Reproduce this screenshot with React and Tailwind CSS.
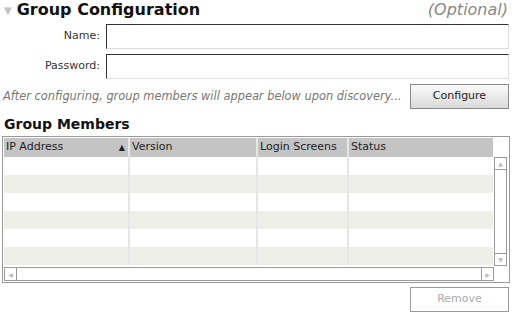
const font = { fontFamily: '"DejaVu Sans", Verdana, sans-serif' }

const columns = [
  { label: 'IP Address', width: 'w-[126px]', sorted: true },
  { label: 'Version', width: 'w-[128px]' },
  { label: 'Login Screens', width: 'w-[91px]' },
  { label: 'Status', width: 'flex-1' },
]

function Field({ label }) {
  return (
    <div className="flex items-center h-[25px]">
      <label className="w-[100px] text-right pr-[6px] text-[11px] text-[#333]">{label}</label>
      <input
        type="text"
        className="h-[25px] w-[403px] border border-t-[#333] border-l-[#333] border-r-[#ddd] border-b-[#ddd] bg-white outline-none"
      />
    </div>
  )
}

function Button({ children, disabled }) {
  return (
    <button
      className={
        'h-[25px] w-[99px] border text-[11px] ' +
        (disabled
          ? 'border-[#999] bg-white text-[#aaa]'
          : 'border-[#888] bg-gradient-to-b from-[#fbfbfb] to-[#d9d9d9] text-[#222]')
      }
    >
      {children}
    </button>
  )
}

export default function App() {
  return (
    <div className="w-[518px] h-[315px] bg-white overflow-hidden text-[#222]" style={font}>
      {/* Title */}
      <div className="flex items-center justify-between h-[20px] pl-[4px] pr-[10px]">
        <div className="flex items-center gap-[5px]">
          <span className="text-[#c4c4c4] text-[10px] leading-none mt-[2px]">▼</span>
          <span className="text-[16px] font-bold leading-none text-[#111]">Group Configuration</span>
        </div>
        <span className="text-[16px] italic text-[#888] leading-none">(Optional)</span>
      </div>

      {/* Fields */}
      <div className="flex flex-col gap-[5px] mt-[4px] pl-[6px]">
        <Field label="Name:" />
        <Field label="Password:" />
      </div>

      {/* Helper + configure */}
      <div className="flex items-center justify-between mt-[5px] pl-[3px] pr-[9px]">
        <span className="text-[11.4px] italic text-[#777]">
          After configuring, group members will appear below upon discovery...
        </span>
        <Button>Configure</Button>
      </div>

      {/* Group members */}
      <div className="mt-[8px] pl-[4px] text-[14px] font-bold leading-none text-[#111]">Group Members</div>

      <div className="mt-[5px] ml-[2px] w-[508px] h-[147px] border border-[#999] p-[1px] flex flex-col">
        <div className="flex flex-1 min-h-0">
          <div className="flex flex-col w-[489px]">
            <div className="flex h-[19px] bg-[#c4c4c4] text-[11px]">
              {columns.map((c) => (
                <div
                  key={c.label}
                  className={`${c.width} flex items-center justify-between px-[2px] border-r-2 border-[#e6e6e6] last:border-r-0`}
                >
                  <span>{c.label}</span>
                  {c.sorted && <span className="text-[8px] mr-[1px]">▲</span>}
                </div>
              ))}
            </div>
            {[0, 1, 2, 3, 4, 5].map((r) => (
              <div key={r} className={`flex h-[18px] ${r % 2 ? 'bg-[#efefe9]' : 'bg-white'}`}>
                {columns.map((c) => (
                  <div key={c.label} className={`${c.width} border-r-2 border-[#e6e6e6] last:border-r-0`} />
                ))}
              </div>
            ))}
          </div>
          <div className="flex-1 flex flex-col items-center pt-[19px]">
            <div className="w-[13px] flex-1 border border-[#999] flex flex-col justify-between">
              <div className="h-[12px] border-b border-[#999] flex items-center justify-center text-[6px] text-[#bbb]">▲</div>
              <div className="h-[12px] border-t border-[#999] flex items-center justify-center text-[6px] text-[#bbb]">▼</div>
            </div>
          </div>
        </div>
        <div className="h-[14px] mt-[1px] w-[490px] border border-[#999] flex justify-between">
          <div className="w-[12px] border-r border-[#999] flex items-center justify-center text-[6px] text-[#bbb]">◀</div>
          <div className="w-[12px] border-l border-[#999] flex items-center justify-center text-[6px] text-[#bbb]">▶</div>
        </div>
      </div>

      <div className="flex justify-end pr-[9px] mt-[4px]">
        <Button disabled>Remove</Button>
      </div>
    </div>
  )
}
